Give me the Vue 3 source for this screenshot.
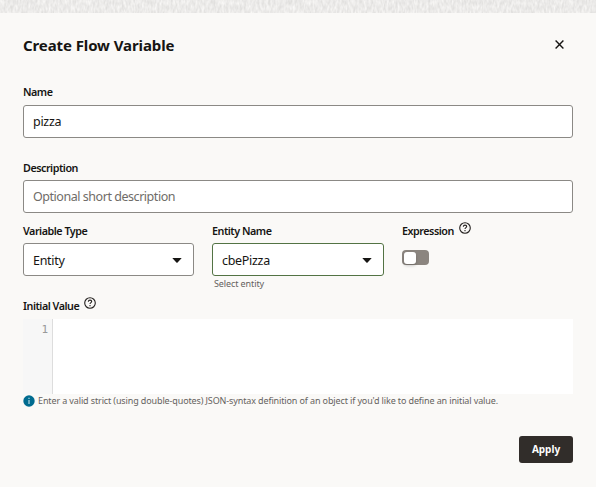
<script setup>
import { ref } from 'vue'

const name = ref('pizza')
const description = ref('')
const selects = [
  { label: 'Variable Type', value: 'Entity', kind: 'type' },
  { label: 'Entity Name', value: 'cbePizza', kind: 'entity', hint: 'Select entity' },
]
</script>

<template>
  <div class="page">
    <svg class="texture" width="596" height="13" aria-hidden="true">
      <filter id="weave" x="0" y="0" width="100%" height="100%" color-interpolation-filters="sRGB">
        <feTurbulence type="fractalNoise" baseFrequency="0.45 0.18" numOctaves="2" seed="8" />
        <feColorMatrix values="0.15 0 0 0 0.85  0.15 0 0 0 0.846  0.15 0 0 0 0.84  0 0 0 0 1" />
      </filter>
      <rect width="596" height="13" filter="url(#weave)" />
    </svg>
    <main class="dialog">
      <header class="header">
        <h1 class="title">Create Flow Variable</h1>
        <button class="close" aria-label="Close">
          <svg width="9" height="9" viewBox="0 0 9 9"><path d="M.6.6l7.8 7.8M8.4.6L.6 8.4" /></svg>
        </button>
      </header>

      <label class="label name-label"><span>Name</span></label>
      <input v-model="name" class="input name-input" />
      <label class="label desc-label"><span>Description</span></label>
      <input v-model="description" class="input desc-input" placeholder="Optional short description" />

      <div class="row">
        <div v-for="s in selects" :key="s.kind" class="field" :class="s.kind">
          <label class="label"><span>{{ s.label }}</span></label>
          <div class="select">
            <span>{{ s.value }}</span>
            <svg width="10" height="5" viewBox="0 0 10 5"><path d="M.3 0h9.4L5.6 4.5q-.6.6-1.2 0z" /></svg>
          </div>
          <div v-if="s.hint" class="hint">{{ s.hint }}</div>
        </div>
        <div class="field expression">
          <label class="label"><span>Expression</span>
            <svg class="help" width="12" height="12" viewBox="0 0 12 12"><circle cx="6" cy="6" r="5.3" /><path d="M4.3 4.7C4.4 3.6 5.1 3.1 6 3.1s1.7.5 1.7 1.4C7.7 5.7 6 5.7 6 7.1M6 8.1v1.1" /></svg>
          </label>
          <div class="switch"><div class="thumb"></div></div>
        </div>
      </div>

      <label class="label initial"><span>Initial Value</span>
        <svg class="help" width="12" height="12" viewBox="0 0 12 12"><circle cx="6" cy="6" r="5.3" /><path d="M4.3 4.7C4.4 3.6 5.1 3.1 6 3.1s1.7.5 1.7 1.4C7.7 5.7 6 5.7 6 7.1M6 8.1v1.1" /></svg>
      </label>
      <div class="editor"><div class="gutter">1</div><div class="code"></div></div>
      <div class="message">
        <svg width="12" height="12" viewBox="0 0 12 12"><circle cx="6" cy="6" r="5.7" fill="#006b8f" /><path d="M6 5v4M6 2.8v1.1" stroke="#c5e0e9" stroke-width="1.1" /></svg>
        <span>Enter a valid strict (using double-quotes) JSON-syntax definition of an object if you'd like to define an initial value.</span>
      </div>
      <footer class="footer"><button class="apply">Apply</button></footer>
    </main>
  </div>
</template>

<style>
body { background: #faf9f7; overflow: hidden; }
</style>

<style scoped>
* { box-sizing: border-box; }
.page { width: 596px; height: 487px; background: #faf9f7; color: #161513; font-family: "Noto Sans", "Open Sans", sans-serif; overflow: hidden; }
.texture { display: block; }
.dialog { padding: 0 23px; }
.header { height: 64px; display: flex; align-items: center; justify-content: space-between; }
.title { margin: 0; font-size: 15px; line-height: 20px; font-weight: 700; letter-spacing: -0.1px; white-space: nowrap; }
.close { width: 27px; height: 27px; margin-bottom: 1px; padding: 0; border: 0; background: none; display: flex; align-items: center; justify-content: center; }
.close svg { display: block; }
.close path { stroke: #161513; stroke-width: 1.4; fill: none; }
.label { display: flex; height: 16px; align-items: center; font-size: 10.75px; line-height: 16px; font-weight: 600; letter-spacing: -0.48px; white-space: nowrap; }
.name-label { margin-top: 7px; }
.input { display: block; width: 550px; height: 33px; padding: 0 9px; border: 1px solid #8b8985; border-radius: 3px; background: #fff; color: #161513; font: 12.5px "Noto Sans", sans-serif; letter-spacing: -0.3px; outline: none; }
.input::placeholder { color: #6f6c68; opacity: 1; letter-spacing: -0.46px; }
.name-input { margin-top: 5px; }
.desc-label { margin-top: 22px; }
.desc-input { margin-top: 4px; }
.row { display: grid; grid-template-columns: 171px 172px 1fr; column-gap: 18px; height: 85px; padding-top: 10px; }
.select { display: flex; align-items: center; justify-content: space-between; height: 33px; margin-top: 4px; padding: 1px 11px 0 9px; border: 1px solid #8b8985; border-radius: 3px; background: #fff; font-size: 12.5px; letter-spacing: -0.3px; }
.entity .select { border-color: #537344; }
.select path { fill: #161513; }
.hint { margin: 1px 0 0 2px; font-size: 9px; line-height: 14px; color: #65625e; letter-spacing: -0.1px; }
.help { position: relative; top: -3px; margin-left: 5px; fill: none; stroke: #24211f; stroke-width: 1.1; }
.switch { width: 27px; height: 15px; margin-top: 11px; padding: 2px; border-radius: 4px; background: #8b857f; }
.thumb { width: 12px; height: 12px; border-radius: 3px; background: #fff; box-shadow: 0 2px 3px rgb(0 0 0 / 18%); }
.editor { display: flex; height: 75px; margin-top: 5px; background: #fff; }
.gutter { width: 30px; padding: 2px 4px 0 0; border-right: 1px solid #ddd; background: #f7f7f7; color: #999; font: 11px/17px "DejaVu Sans Mono", monospace; text-align: right; }
.code { flex: 1; }
.message { display: flex; align-items: center; height: 14px; font-size: 9px; line-height: 14px; letter-spacing: -0.125px; color: #65625e; white-space: nowrap; gap: 3px; }
.message path { fill: none; }
.footer { display: flex; justify-content: flex-end; margin-top: 28px; }
.apply { width: 54px; height: 27px; padding: 0 0 1px; border: 0; border-radius: 3px; background: #312d2a; color: #fff; font: 700 10px "Noto Sans", sans-serif; }
</style>
